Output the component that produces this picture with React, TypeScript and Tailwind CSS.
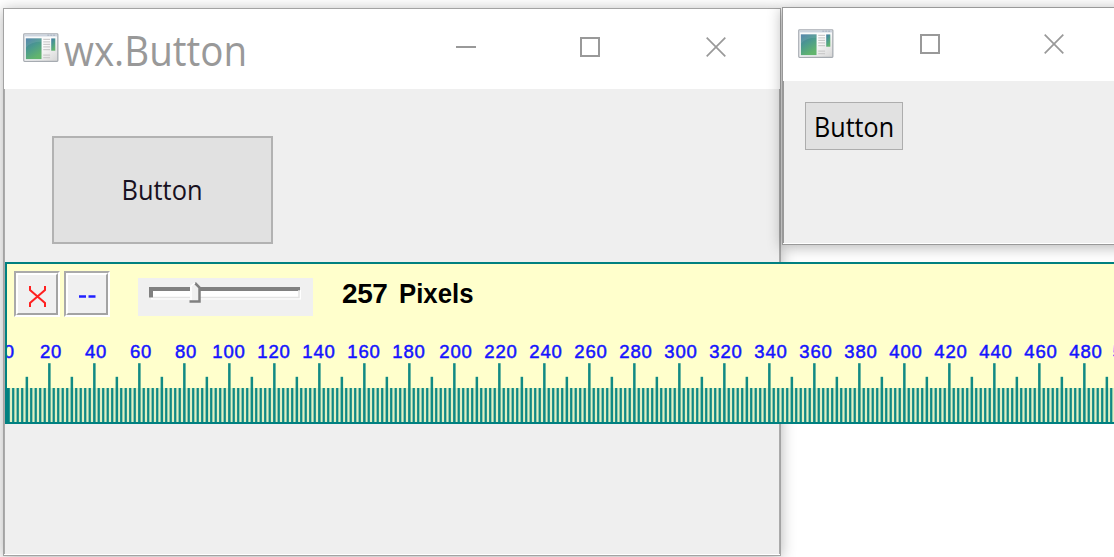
const labels = Array.from({ length: 24 }, (_, i) => (i + 1) * 20);
const ticks = Array.from({ length: 248 }, (_, i) => i * 2);

function AppIcon() {
  return (
    <svg className="block h-[29.5px] w-[36px] shrink-0" viewBox="0 0 37 30" preserveAspectRatio="none">
      <defs>
        <linearGradient id="screen" x1="0" y1="0" x2="0.5" y2="1">
          <stop offset="0" stopColor="#4378a4" />
          <stop offset="0.5" stopColor="#4b9a8e" />
          <stop offset="1" stopColor="#62b56d" />
        </linearGradient>
        <linearGradient id="frame" x1="0" y1="0" x2="1" y2="1">
          <stop offset="0.5" stopColor="#fcfcfc" />
          <stop offset="1" stopColor="#d5d5d5" />
        </linearGradient>
      </defs>
      <rect x="0.8" y="0.8" width="35" height="28" rx="0.8" fill="url(#frame)" stroke="#a6abb1" strokeWidth="1.3" />
      <rect x="1.5" y="1.5" width="33.6" height="2" fill="#ccd4df" />
      <path d="M25 2.2h9" stroke="#a4adba" strokeWidth="1" strokeDasharray="2 1" />
      <rect x="2.5" y="5" width="17" height="22.5" fill="#e5e9ec" />
      <rect x="3" y="5.5" width="16" height="21" fill="url(#screen)" />
      <path d="M3 15Q8 9 19 9V5.5H3z" fill="#fff" opacity="0.1" />
      <path d="M20.8 6.5h7M20.8 9h7M20.8 11.5h7M20.8 14.2h7M20.8 17h7M20.8 22.5h7M20.8 25h7" stroke="#cbcbcb" strokeWidth="1.3" />
      <rect x="29" y="5.5" width="4.2" height="12.5" fill="url(#screen)" />
    </svg>
  );
}

function Minimize() {
  return <div className="h-[2px] w-5 bg-[#999]" />;
}

function Maximize() {
  return <div className="h-5 w-5 border-2 border-[#999]" />;
}

function Close() {
  return (
    <svg className="block h-5 w-5" viewBox="0 0 20 20">
      <path d="M0.7 0.7L19.3 19.3M19.3 0.7L0.7 19.3" stroke="#999" strokeWidth="1.7" />
    </svg>
  );
}

function ToolButton({ children }: { children: React.ReactNode }) {
  return (
    <div className="h-[46px] w-[46px] border-2 border-t-[#aaa] border-r-white border-b-white border-l-[#aaa] bg-[#f0f0f0]">
      <div className="flex h-full w-full items-center justify-center border-2 border-t-white border-r-[#a3a3a3] border-b-[#a3a3a3] border-l-white">
        {children}
      </div>
    </div>
  );
}

function Slider() {
  return (
    <svg className="block h-[38px] w-[175px]" viewBox="0 0 175 38">
      <rect width="175" height="38" fill="#f0f0f0" />
      <rect x="13" y="12" width="150" height="9.5" fill="#fff" />
      <path d="M13 19.5V11H162" fill="none" stroke="#808080" strokeWidth="4" />
      <path d="M15 19.5H161V12" fill="none" stroke="#e3e3e3" strokeWidth="1.5" />
      <path d="M53 8L57 4L62 9V25H52V8z" fill="#f0f0f0" />
      <path d="M57 5L61.5 9.5V23.5H51.5" fill="none" stroke="#808080" strokeWidth="2.5" />
      <path d="M53 22V8L57 5" fill="none" stroke="#fff" strokeWidth="1.5" />
    </svg>
  );
}

function Scale() {
  return (
    <svg className="block h-[84px] w-[1109px]" viewBox="5 340 1109 84">
      {ticks.map((v) => {
        const top = v === 0 ? 388 : v % 20 === 0 ? 363.2 : v % 10 === 0 ? 376.8 : 388;
        return <rect key={v} x={3.1 + v * 2.25} y={top} width={v % 10 === 0 ? 2.5 : 2.25} height={424 - top} fill="#128a84" />;
      })}
      <rect x="5" y="388" width="1109" height="34" fill="#008080" opacity="0.12" />
      <rect x="5" y="388" width="4" height="34" fill="#008080" />
      <g fill="#1414ff" stroke="#1414ff" strokeWidth="0.5" fontFamily="Liberation Sans, Arial, sans-serif" fontSize="18.5" textAnchor="middle" letterSpacing="0.8">
        <text x="9.3" y="358.4">0</text>
        {labels.map((v) => (
          <text key={v} x={6 + v * 2.25 - (v >= 100 && v < 200 ? 2 : 0)} y="358.4">{v}</text>
        ))}
        <text x="1129.5" y="358.4">500</text>
      </g>
    </svg>
  );
}

export default function App() {
  return (
    <div className="relative h-[557px] w-[1114px] overflow-hidden bg-white font-['Open_Sans','Noto_Sans',sans-serif]">
      <section className="absolute top-[8px] left-[3px] flex h-[548px] w-[778px] flex-col border border-[#a3a3a3] bg-white shadow-[0_2px_14px_rgba(0,0,0,0.3)]">
        <header className="flex h-20 shrink-0 items-start">
          <div className="pt-[24px] pl-[19px]"><AppIcon /></div>
          <h1 className="mt-[11px] ml-[5px] w-[186px] origin-left scale-x-[0.93] text-[41.5px] leading-[61px] font-normal whitespace-nowrap text-[#999]">wx.Button</h1>
          <div className="ml-[206px] flex pt-[28px]">
            <div className="flex h-5 w-5 items-center"><Minimize /></div>
            <div className="ml-[104px]"><Maximize /></div>
            <div className="ml-[106px]"><Close /></div>
          </div>
        </header>
        <main className="mb-px grow border-r border-l border-[#aaa] bg-[#efefef] pt-[47px] pl-[47px]">
          <button className="flex h-[108px] w-[221px] items-center justify-center border-2 border-[#b2b2b2] bg-[#e1e1e1] text-[27px] text-[#181020]">
            <span className="scale-x-[0.94]">Button</span>
          </button>
        </main>
      </section>
      <section className="absolute top-[7px] left-[782px] flex h-[238px] w-[400px] flex-col border border-[#999] bg-white shadow-[0_2px_14px_rgba(0,0,0,0.3)]">
        <header className="flex h-[73px] shrink-0 items-start">
          <div className="pt-[21px] pl-[15px]"><AppIcon /></div>
          <div className="ml-[86px] flex pt-[26px]">
            <Maximize />
            <div className="ml-[104px]"><Close /></div>
          </div>
        </header>
        <main className="mb-px grow border-l border-[#999] bg-[#efefef] pt-[21px] pl-[21px]">
          <button className="flex h-[48px] w-[98px] items-center justify-center border border-[#adadad] bg-[#e1e1e1] pt-[2px] text-[27px] text-black">
            <span className="scale-x-[0.93]">Button</span>
          </button>
        </main>
      </section>
      <section className="absolute top-[262px] left-[5px] flex h-[162px] w-[1109px] flex-col justify-between overflow-hidden bg-[#ffffcc]">
        <div className="flex h-[60px] items-start pt-[9px] pl-[9px]">
          <ToolButton>
            <svg className="mt-1 h-[21px] w-[19px]" viewBox="0 0 19 21">
              <path d="M2 0V4L17 17V21M17 0V4L2 17V21" fill="none" stroke="#ff2020" strokeWidth="2" />
            </svg>
          </ToolButton>
          <div className="ml-1">
            <ToolButton>
              <svg className="mt-[5px] h-[3px] w-[17px]" viewBox="0 0 17 3">
                <path d="M0 1.5h7M9.5 1.5h7" stroke="#2020ff" strokeWidth="2.3" />
              </svg>
            </ToolButton>
          </div>
          <div className="mt-[7px] ml-[28px]"><Slider /></div>
          <div className="mt-[5px] ml-[29px] flex gap-[11px] font-['Liberation_Sans',Arial,sans-serif] text-[28px] leading-[36px] font-bold whitespace-nowrap text-black">
            <span className="tracking-[-0.4px]">257</span>
            <span className="origin-left scale-x-[0.92]">Pixels</span>
          </div>
        </div>
        <Scale />
        <div className="pointer-events-none absolute inset-0 border-t-2 border-b-2 border-l-2 border-[#008080]" />
      </section>
    </div>
  );
}
